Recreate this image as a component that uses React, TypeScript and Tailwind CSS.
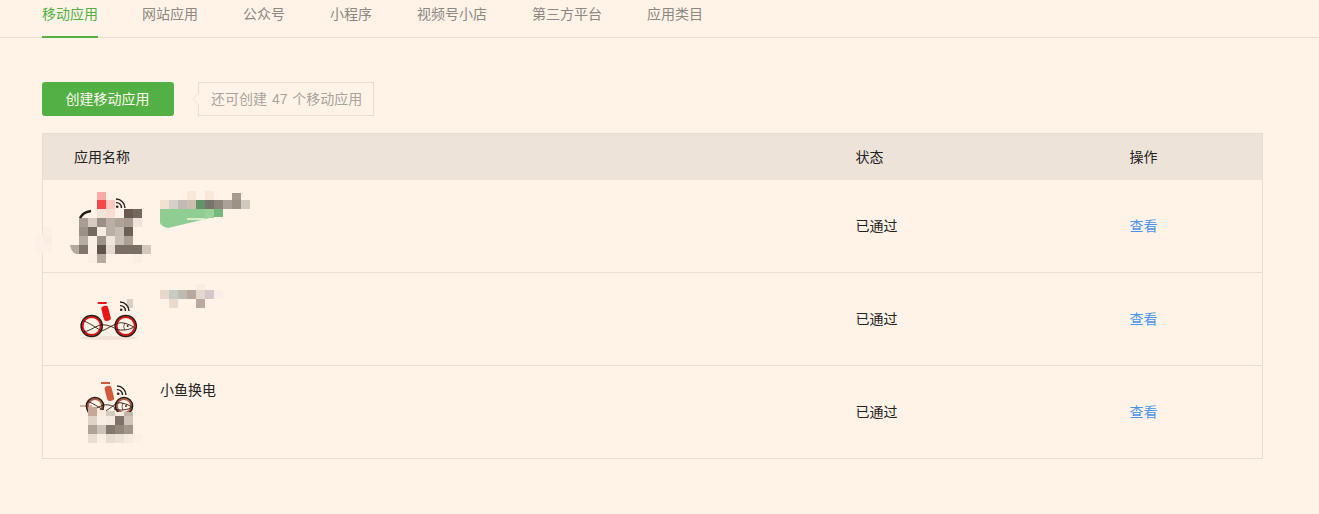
const CELL = 9;
type C = [number, number, string];
const icon1: C[] = [
  [97,192,"#f9a9a6"],[97,200,"#f4474a"],[106,200,"#fdc8c0"],
  [97,209,"#f1e4d8"],[106,209,"#fbdcd0"],[124,209,"#6a5b50"],[133,209,"#75695f"],
  [79,218,"#a69d94"],[88,218,"#d5cbc1"],[97,218,"#9a9087"],[106,218,"#baafa5"],[115,218,"#aea398"],[124,218,"#a79d92"],[133,218,"#eee4da"],
  [79,227,"#9b9188"],[88,227,"#746a61"],[97,227,"#f5ece2"],[106,227,"#baafa5"],[115,227,"#c7bcb1"],[124,227,"#6a6056"],
  [79,236,"#b5aba1"],[88,236,"#fbf0e6"],[97,236,"#9c9288"],[106,236,"#f0e5da"],[115,236,"#c9beb3"],[124,236,"#aaa095"],
  [79,245,"#80766c"],[88,245,"#fbf0e6"],[97,245,"#5e544b"],[106,245,"#e4dacf"],[115,245,"#7a6f65"],[124,245,"#7a6f65"],[133,245,"#7a6f65"],[142,245,"#d3c9be"],
  [88,254,"#f8eee4"],[97,254,"#b5aba1"],[133,254,"#f8eee4"],
  [43,226,"#faf0e6"],[43,235,"#f8eee3"],[34,235,"#fbf1e7"],[34,244,"#fbf1e7"],[43,244,"#fbf1e7"],
];
const icon3: C[] = [
  [88,407,"#c5a898"],
  [88,416,"#ddd3c8"],[97,416,"#f7eee5"],[106,416,"#f3eae0"],[115,416,"#7e7268"],[124,416,"#cec4ba"],
  [88,425,"#ada397"],[97,425,"#cdc4b9"],[106,425,"#82786e"],[115,425,"#918679"],[124,425,"#a0968a"],
  [88,434,"#e8ddd2"],[97,434,"#f9efe5"],[106,434,"#e6dccf"],[115,434,"#ece2d7"],[124,434,"#f6ebe1"],[133,434,"#faf0e6"],
];
const name1: C[] = [
  [187,191,"#f8e8da"],[205,191,"#f8e8da"],[232,193,"#a59b8e"],
  [160,200,"#f4e0d0"],[169,200,"#d3d0ca"],[178,200,"#c0bab2"],[187,200,"#cdbfb0"],[196,200,"#63936a"],[205,200,"#79756c"],[214,200,"#8f8479"],[223,200,"#aaa298"],[232,200,"#9d9286"],[241,200,"#cfc9c0"],
];
const name2: C[] = [
  [196,284,"#f8ede4"],
  [160,290,"#e6d8cc"],[169,290,"#c8cac4"],[178,290,"#c0bbb0"],[187,290,"#b8a89e"],[196,290,"#e3d8cc"],[205,290,"#d4c8cc"],[214,290,"#f9efe6"],
  [169,299,"#e9dacd"],[196,299,"#baa9a0"],
];

function Cells({ data }: { data: C[] }) {
  return <>{data.map(([x, y, f]) => <rect key={`${x}-${y}`} x={x} y={y} width={CELL} height={CELL} fill={f} />)}</>;
}
function Wifi({ x, y, s = 1 }: { x: number; y: number; s?: number }) {
  return (
    <g transform={`translate(${x} ${y}) scale(${s})`} fill="none" stroke="#2a2420" strokeWidth="1.4">
      <circle cx="1.2" cy="8.8" r="1.3" fill="#2a2420" stroke="none" />
      <path d="M0 4.6A5 5 0 0 1 5.4 10" />
      <path d="M0 1A9 9 0 0 1 9 10" />
    </g>
  );
}
function Bike({ lx, rx, cy, r, body, rim }: { lx: number; rx: number; cy: number; r: number; body: string; rim: string }) {
  return (
    <g fill="none">
      <circle cx={lx} cy={cy} r={r - 0.4} stroke={rim} strokeWidth="2" />
      <circle cx={lx} cy={cy} r={r + 1.1} stroke="#2a1a14" strokeWidth="1.5" />
      <circle cx={rx} cy={cy} r={r - 0.4} stroke={rim} strokeWidth="2" />
      <circle cx={rx} cy={cy} r={r + 1.1} stroke="#2a1a14" strokeWidth="1.5" />
      <path d={`M${lx - 8} ${cy - 5}C${lx} ${cy - 2} ${lx + 6} ${cy + 3} ${lx + 10} ${cy + 5}C${lx + 16} ${cy + 3} ${rx - 8} ${cy - 5} ${rx - 2} ${cy - 3}C${rx + 3} ${cy - 2} ${rx + 6} ${cy} ${rx + 8} ${cy + 1}C${rx + 4} ${cy + 4} ${rx - 4} ${cy + 5} ${rx - 10} ${cy + 3}C${lx + 22} ${cy + 1} ${lx + 14} ${cy - 2} ${lx + 9} ${cy - 1}C${lx + 4} ${cy} ${lx} ${cy + 4} ${lx - 8} ${cy + 6}`} stroke="#2a1a14" strokeWidth="0.9" />
      <path d={`M${rx - 1} ${cy - 3}Q${rx - 3} ${cy + 1} ${rx - 1} ${cy + 4}`} stroke="#2a1a14" strokeWidth="0.7" />
      <circle cx={rx + 2} cy={cy} r="0.9" fill="#2a1a14" />
      <rect x={lx + 11} y={cy - 20} width="7" height="15" rx="2.5" transform={`rotate(-14 ${lx + 14} ${cy - 12})`} fill={body} />
      <rect x={lx + 6} y={cy - 24} width="9" height="2" fill={body} />
    </g>
  );
}

function Row({ children, name, last }: { children: React.ReactNode; name: React.ReactNode; last?: boolean }) {
  return (
    <div className={`flex ${last ? "h-[92px]" : "h-[93px] border-b border-[#e8ddd2]"}`}>
      <div className="flex w-[812px] shrink-0 pl-[31px]">
        <div className="w-[86px] shrink-0">{children}</div>
        {name}
      </div>
      <div className={`flex w-[274px] shrink-0 items-center pl-[0.5px] text-[#222222] ${last ? "" : "pb-[1px]"}`}>已通过</div>
      <div className={`flex flex-1 items-center pl-[0.5px] text-[#4a94ec] ${last ? "" : "pb-[1px]"}`}>查看</div>
    </div>
  );
}

const tabs = ["移动应用", "网站应用", "公众号", "小程序", "视频号小店", "第三方平台", "应用类目"];

export default function App() {
  return (
    <div className="h-[514px] overflow-hidden bg-[#fff3e8] text-sm font-['Liberation_Sans','Noto_Sans_CJK_SC',sans-serif] text-[#222222]">
      <nav className="flex h-[38px] gap-[45px] border-b border-[#e8ddd2] pl-[42px]">
        {tabs.map((t, i) => (
          <div key={t} className={`h-[38px] leading-[28px] ${i === 0 ? "mr-[-1px] border-b-2 border-[#53b044] text-[#53b044]" : "text-[#8d8780]"}`}>{t}</div>
        ))}
      </nav>
      <div className="flex items-center gap-6 pl-[42px] pt-[44px]">
        <button className="flex h-[34px] w-[132px] items-center justify-center rounded-[3px] bg-[#53b044] pb-[1px] pr-[1px] text-[#fff7ee]">创建移动应用</button>
        <div className="relative flex h-[34px] w-[176px] items-center border border-[#e8ddd2] pb-[1px] pl-3 text-[#a9a39b] [word-spacing:1px]">
          <span className="absolute left-[-5px] top-[12px] h-2 w-2 rotate-45 border-b border-l border-[#f0e6dc] bg-[#fff3e8]" />
          还可创建 47 个移动应用
        </div>
      </div>
      <div className="ml-[42px] mt-[17px] w-[1221px] border border-[#e8ddd2]">
        <div className="flex h-[46px] items-center bg-[#ede3d9] pb-[1px]">
          <div className="w-[812px] pl-[31px]">应用名称</div>
          <div className="w-[274px] pl-[0.5px]">状态</div>
          <div className="pl-[0.5px]">操作</div>
        </div>
        <Row
          name={
            <svg viewBox="160 180 100 60" className="h-[60px] w-[100px] overflow-visible">
              <Cells data={name1} />
              <path d="M160 209H214V217L168 228Q162 227 160 223Z" fill="#8fcd92" />
              <rect x="205" y="209" width="9" height="9" fill="#9ad29c" />
              <rect x="214" y="209" width="9" height="8" fill="#77b87c" />
              <rect x="187" y="218" width="18" height="2" fill="#dcebc9" />
            </svg>
          }
        >
          <svg viewBox="74 180 86 92" className="h-[92px] w-[86px] overflow-visible">
            <path d="M70 245H79V254H76Q71 252 70 245Z" fill="#b2a99f" />
            <Cells data={icon1} />
            <path d="M80 218Q83 212 91 211" fill="none" stroke="#1e1a16" strokeWidth="2.5" />
            <Wifi x={116} y={198} />
          </svg>
        </Row>
        <Row
          name={
            <svg viewBox="160 273 100 60" className="h-[60px] w-[100px] overflow-visible">
              <Cells data={name2} />
            </svg>
          }
        >
          <svg viewBox="74 273 86 92" className="h-[92px] w-[86px] overflow-visible">
            <ellipse cx="109" cy="338" rx="29" ry="2" fill="#f0e3d6" />
            <rect x="127" y="299" width="6" height="9" fill="#d8d0c6" />
            <Bike lx={91.7} rx={125.7} cy={326} r={9.5} body="#ea1515" rim="#e01010" />
            <Wifi x={120} y={301} />
          </svg>
        </Row>
        <Row
          last
          name={<div className="pt-[14px] leading-5">小鱼换电</div>}
        >
          <svg viewBox="74 366 86 92" className="h-[92px] w-[86px] overflow-visible">
            <path d="M80 406H92" stroke="#a8776a" strokeWidth="1" />
            <Bike lx={95} rx={124} cy={406} r={7.5} body="#d2583a" rim="#b5604a" />
            <Cells data={icon3} />
            <rect x="97" y="410" width="9" height="6" fill="#f7ebe0" />
            <rect x="106" y="411" width="9" height="5" fill="#d5cabd" />
            <rect x="115" y="412" width="9" height="4" fill="#f3e8dc" />
            <rect x="124" y="412" width="9" height="4" fill="#c5b5a8" />
            <Wifi x={117} y={385} />
          </svg>
        </Row>
      </div>
    </div>
  );
}
